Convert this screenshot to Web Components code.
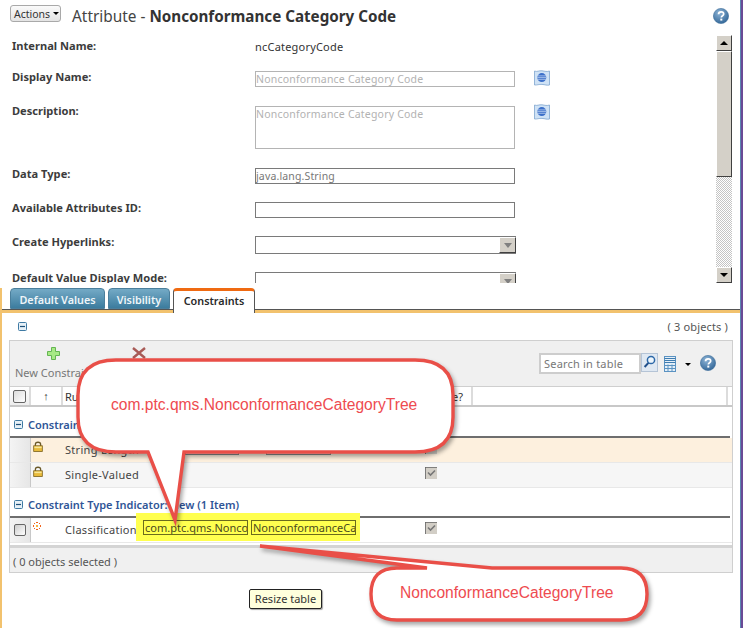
<!DOCTYPE html>
<html>
<head>
<meta charset="utf-8">
<title>Attribute</title>
<style>
	html, body { margin: 0; padding: 0; background: #fff; }
	body { font: 12px "Noto Sans", "DejaVu Sans", sans-serif; color: #333; }
</style>
</head>
<body>
<attr-page>
	<page-header slot="header" title-prefix="Attribute - " title-name="Nonconformance Category Code"></page-header>

	<form-pane slot="form">
		<form-row label="Internal Name:" h="31" off="1"><span class="plain">ncCategoryCode</span></form-row>
		<form-row label="Display Name:" h="34" off="2" globe><text-box w="260" h="16" muted>Nonconformance Category Code</text-box></form-row>
		<form-row label="Description:" h="63" off="3" globe><text-box w="260" h="43" muted>Nonconformance Category Code</text-box></form-row>
		<form-row label="Data Type:" h="34" off="2"><text-box w="260" h="16" dim>java.lang.String</text-box></form-row>
		<form-row label="Available Attributes ID:" h="34" off="2"><text-box w="260" h="16"></text-box></form-row>
		<form-row label="Create Hyperlinks:" h="36" off="2"><combo-box></combo-box></form-row>
		<form-row label="Default Value Display Mode:" h="36" off="2"><combo-box></combo-box></form-row>
	</form-pane>

	<tab-strip slot="tabs">
		<tab-item w="95">Default Values</tab-item>
		<tab-item w="62">Visibility</tab-item>
		<tab-item w="82" active>Constraints</tab-item>
	</tab-strip>

	<constraint-table slot="table">
		<table-group>Constraint Type Indicator: Inherited (2 Items)</table-group>
		<table-row tone="peach" icon="lock" label="String Length" a=" " b=" " w1="54" w2="65"></table-row>
		<table-row tone="grey" icon="lock" label="Single-Valued"></table-row>
		<table-group second>Constraint Type Indicator: New (1 Item)</table-group>
		<table-row selectable mark icon="star" label="Classification" a="com.ptc.qms.NonconformanceCategoryTree" b="NonconformanceCategoryTree"></table-row>
	</constraint-table>

	<resize-tip slot="resize">Resize table</resize-tip>

	<call-out slot="notes" x="70" y="350" w="400" h="180" tx="41" ty="55"
		d="M46 10H345Q383 10 383 45V67Q383 102 345 102H114L105 170L78 102H46Q8 102 8 67V45Q8 10 46 10Z">com.ptc.qms.NonconformanceCategoryTree</call-out>
	<call-out slot="notes" x="255" y="540" w="400" h="88" tx="145" ty="53"
		d="M142 28H172L5 6L237 28H366Q392 28 392 54Q392 80 366 80H142Q116 80 116 54Q116 28 142 28Z">NonconformanceCategoryTree</call-out>
</attr-page>

<script>
const ICONS = {
	help: `<svg viewBox="0 0 16 16" width="16" height="16"><defs><radialGradient id="h" cx=".4" cy=".3" r=".8"><stop offset="0" stop-color="#8db4d6"/><stop offset="1" stop-color="#2a5f92"/></radialGradient></defs><circle cx="8" cy="8" r="7.6" fill="url(#h)" stroke="#3d6d9b" stroke-width=".6"/><path d="M5.5 6.2C5.6 4.6 6.7 3.8 8.1 3.8C9.6 3.8 10.7 4.7 10.7 6C10.7 7.7 8.3 7.7 8.3 9.5" fill="none" stroke="#fff" stroke-width="1.7"/><rect x="7.3" y="10.6" width="2" height="2" fill="#fff"/></svg>`,
	globe: `<svg viewBox="0 0 16 16" width="16" height="16"><path d="M.5 1C3 2.2 5 .4 8 .8S13 2 15.5 1V15C13 15.6 11 14.6 8 14.4S3 15.2.5 15Z" fill="#cfe2f5" stroke="#7fa6cf" stroke-width=".8"/><circle cx="7.8" cy="7.6" r="4.5" fill="#3b6fc9"/><path d="M3.4 5.9H12.2M3.2 7.6H12.4M3.4 9.3H12.2" stroke="#bcd2f0" stroke-width=".8"/></svg>`,
	lock: `<svg viewBox="0 0 10 11" width="10" height="11"><path d="M2.4 5V3.2C2.4 .6 7.6 .6 7.6 3.2V5" fill="none" stroke="#6b5a2a" stroke-width="1.3"/><rect x=".7" y="4.8" width="8.6" height="5.6" fill="#e8bb3c" stroke="#7a5f18" stroke-width=".8"/><rect x="1.4" y="5.6" width="7.2" height="1.5" fill="#f8e79a"/></svg>`,
	star: `<svg viewBox="0 0 8 8" width="8" height="8"><g fill="#f0641e"><rect x="3" y="0" width="2" height="1"/><rect x="3" y="7" width="2" height="1"/><rect x="0" y="3" width="1" height="2"/><rect x="7" y="3" width="1" height="2"/><rect x="1" y="1" width="1" height="1"/><rect x="6" y="1" width="1" height="1"/><rect x="1" y="6" width="1" height="1"/><rect x="6" y="6" width="1" height="1"/><rect x="3" y="3" width="2" height="2" fill="#f8b23c"/></g></svg>`,
	plus: `<svg viewBox="0 0 13 13" width="13" height="13"><path d="M4.5 .5H8.5V4.5H12.5V8.5H8.5V12.5H4.5V8.5H.5V4.5H4.5Z" fill="#a7ea85" stroke="#65b553"/></svg>`,
	cross: `<svg viewBox="0 0 14 12" width="14" height="12"><path d="M1 1L13 11M13 1L1 11" stroke="#a85a56" stroke-width="2.4"/></svg>`,
	minus: `<svg viewBox="0 0 9 9" width="9" height="9"><rect x=".5" y=".5" width="8" height="8" rx="1" fill="#e6f0f7" stroke="#3f7aa3"/><path d="M2 4.5H7" stroke="#1d4f78" stroke-width="1.2"/></svg>`,
	search: `<svg viewBox="0 0 17 19" width="17" height="19"><rect x=".5" y=".5" width="16" height="18" fill="#dfe8f2" stroke="#b5c4d6"/><circle cx="10" cy="7" r="3.6" fill="#eef6fc" stroke="#2c68a8" stroke-width="1.5"/><path d="M7.4 9.8L3.6 14" stroke="#1f4f8a" stroke-width="2"/></svg>`,
	columns: `<svg viewBox="0 0 12 16" width="12" height="16"><rect x=".5" y=".5" width="11" height="15" fill="#e4eff8" stroke="#5b93c2"/><path d="M.5 2.5H11.5M.5 4.5H11.5M.5 6.5H11.5" stroke="#3f7cb0"/><path d="M.5 9.5H11.5M.5 12.5H11.5M4 8.5V15.5M8 8.5V15.5" stroke="#5b93c2"/></svg>`,
	check: `<svg viewBox="0 0 12 12" width="12" height="12"><rect width="12" height="12" fill="#d2cec6"/><path d="M0 12V0H12" fill="none" stroke="#666" stroke-width="1.6"/><path d="M3 5.5L5.5 8L10 3.5" fill="none" stroke="#777" stroke-width="1.6"/></svg>`
};

// small base class: every element gets an open shadow root from its markup()
class UiBase extends HTMLElement {
	connectedCallback() {
		if (!this.shadowRoot) {
			this.attachShadow({ mode: "open" });
			this.shadowRoot.innerHTML = this.markup();
		}
	}
}

class UiIcon extends UiBase {
	markup() {
		return `<style>:host { display: inline-flex; flex: none; } svg { display: block; }</style>${ICONS[this.getAttribute("name")]}`;
	}
}

class AttrPage extends UiBase {
	markup() {
		return `
			<style>
				:host {
					display: block;
					position: relative;
					width: 743px;
					height: 628px;
					overflow: hidden;
					background: #fff;
					font: 12px "Noto Sans", "DejaVu Sans", sans-serif;
					color: #333;
				}
				.edge {
					position: absolute;
					top: 0;
					right: 0;
					bottom: 0;
					width: 3px;
					background: linear-gradient(90deg, #5b86b0 0 1px, #6a4a96 1px);
				}
				.lower {
					border-left: 2px solid #f2c26e;
					height: 315px;
					box-sizing: border-box;
				}
			</style>
			<slot name="header"></slot>
			<slot name="form"></slot>
			<slot name="tabs"></slot>
			<div class="lower">
				<slot name="table"></slot>
				<slot name="resize"></slot>
			</div>
			<slot name="notes"></slot>
			<div class="edge"></div>
		`;
	}
}

class PageHeader extends UiBase {
	markup() {
		return `
			<style>
				:host { display: flex; align-items: flex-start; height: 35px; box-sizing: border-box; padding: 5px 14px 0 10px; }
				.actions {
					display: flex;
					align-items: center;
					gap: 3px;
					width: 51px;
					height: 17px;
					box-sizing: border-box;
					padding-left: 3px;
					border: 1px solid #a9a9a9;
					border-radius: 3px;
					background: linear-gradient(#fafafa, #e4e4e4);
					font-size: 10.5px;
				}
				.caret { width: 0; height: 0; border: 3px solid transparent; border-top: 3px solid #000; border-bottom: 0; }
				h1 { margin: 0 0 0 11px; flex: 1; font: 400 15.4px/23px "Noto Sans", sans-serif; color: #444; white-space: pre; }
				b { color: #333; font-size: 15.2px; }
				ui-icon { margin-top: 3px; }
			</style>
			<div class="actions">Actions<span class="caret"></span></div>
			<h1>${this.getAttribute("title-prefix")}<b>${this.getAttribute("title-name")}</b></h1>
			<ui-icon name="help"></ui-icon>
		`;
	}
}

class FormPane extends UiBase {
	markup() {
		return `
			<style>
				:host { display: flex; height: 248px; overflow: hidden; padding-right: 11px; margin-bottom: 5px; }
				.rows { flex: 1; padding: 3px 0 0 12px; min-width: 0; }
				.bar { flex: none; width: 16px; margin-left: auto; display: flex; flex-direction: column; }
				.btn {
					height: 16px;
					box-sizing: border-box;
					background: #d4d0c8;
					border: 1px solid;
					border-color: #fff #404040 #404040 #fff;
					display: flex;
					align-items: center;
					justify-content: center;
				}
				.up { width: 0; height: 0; border: 4px solid transparent; border-bottom: 4px solid #000; border-top: 0; }
				.down { width: 0; height: 0; border: 4px solid transparent; border-top: 4px solid #000; border-bottom: 0; }
				.thumb {
					height: 126px;
					box-sizing: border-box;
					background: #d4d0c8;
					border: 1px solid;
					border-color: #fff #404040 #404040 #fff;
				}
				.track { flex: 1; background: conic-gradient(#c4c4c4 25%, #fff 0 50%, #c4c4c4 0 75%, #fff 0) 0 0 / 2px 2px; }
			</style>
			<div class="rows"><slot></slot></div>
			<div class="bar">
				<div class="btn"><span class="up"></span></div>
				<div class="thumb"></div>
				<div class="track"></div>
				<div class="btn"><span class="down"></span></div>
			</div>
		`;
	}
}

class FormRow extends UiBase {
	markup() {
		const h = this.getAttribute("h");
		const off = this.getAttribute("off");
		const globe = this.hasAttribute("globe") ? `<ui-icon name="globe"></ui-icon>` : "";
		return `
			<style>
				:host { display: flex; height: ${h}px; align-items: flex-start; }
				.label { width: 243px; flex: none; font-weight: 700; line-height: 16px; font-size: 11.1px; color: #3c3c3c; white-space: nowrap; }
				.field { margin-top: ${off}px; flex: none; line-height: 16px; font-size: 11px; letter-spacing: .2px; }
				ui-icon { margin: 1px 0 0 19px; }
			</style>
			<div class="label">${this.getAttribute("label")}</div>
			<div class="field"><slot></slot></div>
			${globe}
		`;
	}
}

class TextBox extends UiBase {
	markup() {
		const muted = this.hasAttribute("muted");
		const dim = this.hasAttribute("dim");
		const border = muted ? "#b4b4b4" : "#7a7a7a";
		const colour = muted ? "#b2b2b2" : "#777";
		return `
			<style>
				:host {
					display: block;
					width: ${this.getAttribute("w")}px;
					height: ${this.getAttribute("h")}px;
					box-sizing: border-box;
					border: 1px solid ${border};
					font-size: 10.5px;
					line-height: 15px;
					letter-spacing: ${dim ? ".15px" : ".2px"};
					color: ${colour};
					white-space: nowrap;
					overflow: hidden;
				}
			</style>
			<slot></slot>
		`;
	}
}

class ComboBox extends UiBase {
	markup() {
		return `
			<style>
				:host {
					display: flex;
					justify-content: flex-end;
					width: 261px;
					height: 18px;
					box-sizing: border-box;
					border: 1px solid #7a7a7a;
					border-right: 0;
				}
				.arrow {
					width: 17px;
					box-sizing: border-box;
					background: #d4d0c8;
					border: 1px solid;
					border-color: #fff #404040 #404040 #fff;
					display: flex;
					align-items: center;
					justify-content: center;
				}
				.arrow i { width: 0; height: 0; border: 4px solid transparent; border-top: 5px solid #808080; border-bottom: 0; }
			</style>
			<div class="arrow"><i></i></div>
		`;
	}
}

class TabStrip extends UiBase {
	markup() {
		return `
			<style>
				:host {
					display: flex;
					gap: 3px;
					height: 25px;
					box-sizing: border-box;
					padding-left: 8px;
					border-left: 2px solid #f2c26e;
					border-bottom: 3px solid #f2c26e;
					box-shadow: inset 0 -1px 0 #555;
					align-items: flex-start;
				}
			</style>
			<slot></slot>
		`;
	}
}

class TabItem extends UiBase {
	markup() {
		const active = this.hasAttribute("active");
		return `
			<style>
				:host {
					display: block;
					width: ${this.getAttribute("w")}px;
					height: 21px;
					box-sizing: border-box;
					text-align: center;
					font-size: 10.8px;
					line-height: 22px;
					border-radius: 4px 4px 0 0;
					white-space: nowrap;
					${active
						? "height: 25px; background: #fff; color: #2a2a2a; font-weight: 600; border: 1px solid #555; border-top: 3px solid #ef6a12; border-bottom: 0; margin-bottom: -3px; line-height: 19px; position: relative;"
						: "background: linear-gradient(#74aac6, #3c7c9e); color: #eef5f9; font-weight: 600; border: 1px solid #4b7f9c;"}
				}
			</style>
			<slot></slot>
		`;
	}
}

class ConstraintTable extends UiBase {
	markup() {
		return `
			<style>
				:host { display: block; padding: 0 10px 0 7px; }
				.count {
					display: flex;
					justify-content: space-between;
					align-items: center;
					height: 27px;
					padding: 0 5px 0 9px;
					color: #555;
					font-size: 11px;
					letter-spacing: .15px;
				}
				.panel { border: 1px solid #cfcfcf; height: 233px; box-sizing: border-box; display: flex; flex-direction: column; }
				.tools { display: flex; height: 45px; background: #f0f0f0; padding-left: 5px; box-sizing: border-box; flex: none; }
				.act { display: flex; flex-direction: column; align-items: center; padding-top: 6px; color: #777; font-size: 11px; gap: 5px; white-space: nowrap; }
				.act + .act { margin-left: 24px; }
				.act ui-icon[name="plus"] { margin-left: -2px; }
				.search { margin-left: auto; display: flex; align-items: flex-start; padding: 12px 16px 0 0; }
				.search .in {
					width: 102px;
					height: 21px;
					box-sizing: border-box;
					border: 2px solid #cdcdcd;
					background: #fff;
					padding-left: 3px;
					color: #777;
					font-size: 11px;
					line-height: 17px;
					letter-spacing: .2px;
				}
				.search ui-icon[name="columns"] { margin: 3px 0 0 6px; }
				.search .caret { width: 0; height: 0; margin: 10px 9px 0 9px; border: 3px solid transparent; border-top: 3px solid #000; border-bottom: 0; }
				.search ui-icon[name="help"] { margin-top: 2px; }
				.head { display: flex; height: 21px; flex: none; box-sizing: border-box; background: #fff; border-top: 1px solid #cfcfcf; border-bottom: 2px solid #c8c8c8; font-size: 11px; line-height: 17px; }
				.head > div { border-right: 2px solid #dcdcdc; box-sizing: border-box; padding-top: 1px; }
				.h-sel { width: 21px; display: flex; justify-content: center; align-items: center; background: linear-gradient(#fff, #eee); }
				.box { width: 11px; height: 11px; border: 1px solid #666; border-radius: 2px; background: linear-gradient(135deg, #ddd, #fff); }
				.h-arrow { width: 32px; text-align: center; font-family: "Liberation Sans", sans-serif; }
				.h-rule { width: 410px; padding-left: 2px; position: relative; }
				.h-rule span { position: absolute; right: 8px; top: 1px; }
				.h-rest { width: 255px; }
				.body { flex: 1; min-height: 0; display: flex; flex-direction: column; }
				.foot { flex: none; height: 27px; box-sizing: border-box; background: #f0f0f0; border-top: 3px solid #d4d4d4; padding-left: 3px; line-height: 27px; color: #555; font-size: 11px; }
			</style>
			<div class="count"><ui-icon name="minus"></ui-icon><span>( 3 objects )</span></div>
			<div class="panel">
				<div class="tools">
					<div class="act"><ui-icon name="plus"></ui-icon><span>New Constraint</span></div>
					<div class="act"><ui-icon name="cross"></ui-icon><span>Remove</span></div>
					<div class="search">
						<div class="in">Search in table</div>
						<ui-icon name="search"></ui-icon>
						<ui-icon name="columns"></ui-icon>
						<span class="caret"></span>
						<ui-icon name="help"></ui-icon>
					</div>
				</div>
				<div class="head">
					<div class="h-sel"><span class="box"></span></div>
					<div class="h-arrow">↑</div>
					<div class="h-rule">Rule<span>Overridable?</span></div>
					<div class="h-rest"></div>
				</div>
				<div class="body"><slot></slot></div>
				<div class="foot">( 0 objects selected )</div>
			</div>
		`;
	}
}

class TableGroup extends UiBase {
	markup() {
		return `
			<style>
				:host {
					display: flex;
					align-items: center;
					gap: 5px;
					height: ${this.hasAttribute("second") ? 30 : 31}px;
					box-sizing: border-box;
					padding: 5px 0 0 4px;
					border-bottom: 2px solid #6e6e6e;
					margin-right: 2px;
					color: #2f5597;
					font-weight: 600;
					font-size: 11px;
					white-space: nowrap;
				}
			</style>
			<ui-icon name="minus"></ui-icon><slot></slot>
		`;
	}
}

class TableRow extends UiBase {
	markup() {
		const tones = { peach: "#fdf0de", grey: "#f6f6f6" };
		const bg = tones[this.getAttribute("tone")] || "#fff";
		const a = this.getAttribute("a");
		const b = this.getAttribute("b");
		const mark = this.hasAttribute("mark");
		const w1 = this.getAttribute("w1") || 105;
		const w2 = this.getAttribute("w2") || 105;
		const inputs = a === null ? "" : `
			<span class="in" style="width:${w1}px">${a}</span>
			<span class="in" style="width:${w2}px">${b}</span>`;
		return `
			<style>
				:host {
					display: grid;
					grid-template-columns: 21px 34px ${mark ? 78 : 121}px ${mark ? 282 : 239}px 1fr;
					align-items: center;
					height: 25px;
					box-sizing: border-box;
					background: ${bg};
					border-bottom: 1px solid #e8e8e8;
					font-size: 11px;
					color: #444;
					white-space: nowrap;
				}
				.sel {
					height: 100%;
					display: flex;
					align-items: center;
					justify-content: center;
					background: linear-gradient(90deg, #f4f4f4, #e6e6e6);
					border-right: 1px solid #c8c8c8;
					box-sizing: border-box;
				}
				.box { width: 10px; height: 10px; border: 1px solid #666; border-radius: 2px; background: linear-gradient(135deg, #ccc, #fff); }
				.icon { padding: 0 0 8px 2px; display: flex; }
				.name { letter-spacing: .3px; margin-top: -2px; }
				.vals { display: flex; gap: 3px; position: relative; height: 100%; align-items: center; ${mark ? "" : "margin-left: -1px; gap: 27px;"} }
				.vals.mark::before { content: ""; position: absolute; left: -7px; top: -5px; width: 224px; height: 28px; background: #ffff4f; }
				.in {
					position: relative;
					box-sizing: border-box;
					height: 15px;
					border: 1px solid ${mark ? "#6b6b1c" : "#888"};
					background: ${mark ? "transparent" : "#fff"};
					overflow: hidden;
					line-height: 14px;
					padding-left: 1px;
					color: #4a4a20;
					margin-bottom: 5px;
				}
				.chk { display: flex; padding-bottom: 5px; }
			</style>
			<div class="sel">${this.hasAttribute("selectable") ? `<span class="box"></span>` : ""}</div>
			<div class="icon"><ui-icon name="${this.getAttribute("icon")}"></ui-icon></div>
			<div class="name">${this.getAttribute("label")}</div>
			<div class="vals ${mark ? "mark" : ""}">${inputs}</div>
			<div class="chk"><ui-icon name="check"></ui-icon></div>
		`;
	}
}

class ResizeTip extends UiBase {
	markup() {
		return `
			<style>
				:host { display: flex; justify-content: center; width: 560px; margin-top: 16px; padding-left: 7px; box-sizing: border-box; }
				div {
					height: 20px;
					box-sizing: border-box;
					padding: 0 5px;
					border: 1px solid #222;
					border-radius: 2px;
					background: #ffffdc;
					box-shadow: 1px 1px 1px rgba(0, 0, 0, .35);
					font-size: 11px;
					line-height: 18px;
				}
			</style>
			<div><slot></slot></div>
		`;
	}
}

class CallOut extends UiBase {
	markup() {
		const w = this.getAttribute("w");
		const h = this.getAttribute("h");
		return `
			<style>
				:host {
					position: absolute;
					left: ${this.getAttribute("x")}px;
					top: ${this.getAttribute("y")}px;
					width: ${w}px;
					height: ${h}px;
				}
				svg { display: block; overflow: visible; filter: drop-shadow(2px 3px 2px rgba(0, 0, 0, .35)); }
				.t {
					position: absolute;
					left: ${this.getAttribute("tx")}px;
					top: ${this.getAttribute("ty")}px;
					transform: translateY(-50%);
					font: 15.6px "Liberation Sans", Arial, sans-serif;
					color: #ee4b50;
					white-space: nowrap;
				}
			</style>
			<svg width="${w}" height="${h}" viewBox="0 0 ${w} ${h}"><path d="${this.getAttribute("d")}" fill="#fff" stroke="#e94f48" stroke-width="3.4" stroke-linejoin="miter"/></svg>
			<div class="t"><slot></slot></div>
		`;
	}
}

customElements.define("ui-icon", UiIcon);
customElements.define("attr-page", AttrPage);
customElements.define("page-header", PageHeader);
customElements.define("form-pane", FormPane);
customElements.define("form-row", FormRow);
customElements.define("text-box", TextBox);
customElements.define("combo-box", ComboBox);
customElements.define("tab-strip", TabStrip);
customElements.define("tab-item", TabItem);
customElements.define("constraint-table", ConstraintTable);
customElements.define("table-group", TableGroup);
customElements.define("table-row", TableRow);
customElements.define("resize-tip", ResizeTip);
customElements.define("call-out", CallOut);
</script>
</body>
</html>
